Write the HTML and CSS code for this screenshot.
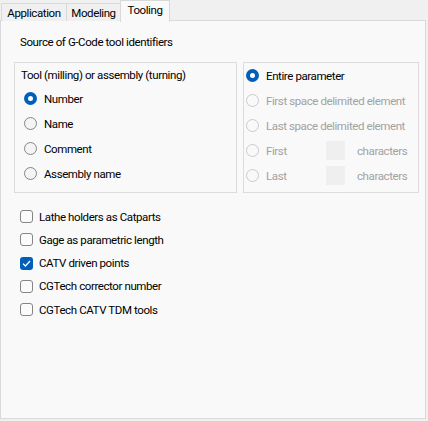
FILE: index.html
```html
<!DOCTYPE html>
<html lang="en">
<head>
  <meta charset="UTF-8">
  <title>Tooling</title>
  <link rel="stylesheet" href="styles.css">
</head>
<body>
  <div class="tabs">
    <div class="tab app">Application</div>
    <div class="tab model">Modeling</div>
    <div class="tab active">Tooling</div>
  </div>
  <div class="panel">
    <div class="heading">Source of G-Code tool identifiers</div>
    <div class="groups">
      <div class="group">
        <div class="group-title">Tool (milling) or assembly (turning)</div>
        <div class="row"><span class="radio checked"></span>Number</div>
        <div class="row"><span class="radio"></span>Name</div>
        <div class="row"><span class="radio"></span>Comment</div>
        <div class="row"><span class="radio"></span>Assembly name</div>
      </div>
      <div class="group right">
        <div class="row"><span class="radio checked"></span>Entire parameter</div>
        <div class="row disabled"><span class="radio"></span>First space delimited element</div>
        <div class="row disabled"><span class="radio"></span>Last space delimited element</div>
        <div class="row disabled">
          <span class="radio"></span><span class="word">First</span>
          <span class="field"></span><span class="unit">characters</span>
        </div>
        <div class="row disabled">
          <span class="radio"></span><span class="word">Last</span>
          <span class="field"></span><span class="unit">characters</span>
        </div>
      </div>
    </div>
    <div class="checks">
      <div class="check-row"><span class="box"></span>Lathe holders as Catparts</div>
      <div class="check-row"><span class="box"></span>Gage as parametric length</div>
      <div class="check-row"><span class="box checked">
        <svg width="9" height="7" viewBox="0 0 9 7"><path d="M1 3.6 L3.4 6 L8 1" fill="none" stroke="#fff" stroke-width="1.3"/></svg>
      </span>CATV driven points</div>
      <div class="check-row"><span class="box"></span>CGTech corrector number</div>
      <div class="check-row"><span class="box"></span>CGTech CATV TDM tools</div>
    </div>
  </div>
</body>
</html>
```
FILE: styles.css
```css
body {
  margin: 0;
  width: 428px;
  height: 421px;
  background: #f0f0f0;
  font-family: Roboto, "Liberation Sans", sans-serif;
  font-size: 11.5px;
  letter-spacing: -0.4px;
  color: #000;
  overflow: hidden;
  white-space: nowrap;
}
.tabs {
  display: flex;
  align-items: flex-end;
  height: 21px;
  padding-left: 1px;
}
.tab {
  height: 18px;
  line-height: 18px;
  text-align: center;
  border: 1px solid #d9d9d9;
  border-bottom: none;
  margin-right: -1px;
  background: #f0f0f0;
  box-sizing: border-box;
}
.tab.app {
  width: 66px;
}
.tab.model {
  width: 55px;
}
.tab.active {
  width: 50px;
  height: 22px;
  line-height: 19px;
  background: #f9f9f9;
  margin-bottom: -1px;
  position: relative;
  z-index: 1;
}
.panel {
  width: 426px;
  height: 399px;
  box-sizing: border-box;
  border: 1px solid #d9d9d9;
  background: #f9f9f9;
  margin-top: -1px;
}
.heading {
  padding: 13px 0 0 19px;
  line-height: 16px;
}
.groups {
  display: grid;
  grid-template-columns: 223px 176px;
  gap: 6px;
  margin: 12px 0 0 13px;
}
.group {
  border: 1px solid #dcdcdc;
  padding: 4px 0 6px 6px;
}
.group.right {
  padding: 0;
}
.group.right .radio {
  margin-left: 2px;
}
.group-title {
  line-height: 16px;
  margin-bottom: 3px;
}
.row {
  display: flex;
  align-items: center;
  height: 25px;
}
.radio {
  width: 13px;
  height: 13px;
  box-sizing: border-box;
  border: 1px solid #858585;
  border-radius: 50%;
  background: #f4f4f4;
  margin: 0 7px 0 3px;
  flex: none;
}
.radio.checked {
  border: 4px solid #005fb8;
  background: #fff;
}
.disabled {
  color: #a2a2a2;
}
.disabled .radio {
  border-color: #cacaca;
  background: transparent;
}
.word {
  width: 60px;
}
.field {
  width: 19px;
  height: 19px;
  background: #efefef;
}
.unit {
  margin-left: 12px;
}
.checks {
  padding: 12px 0 0 19px;
}
.check-row {
  display: flex;
  align-items: center;
  height: 23.25px;
}
.box {
  width: 13px;
  height: 13px;
  box-sizing: border-box;
  border: 1px solid #858585;
  border-radius: 3px;
  background: #fbfbfb;
  margin-right: 6px;
  display: flex;
  align-items: center;
  justify-content: center;
}
.box.checked {
  border: none;
  background: #005fb8;
}
```
